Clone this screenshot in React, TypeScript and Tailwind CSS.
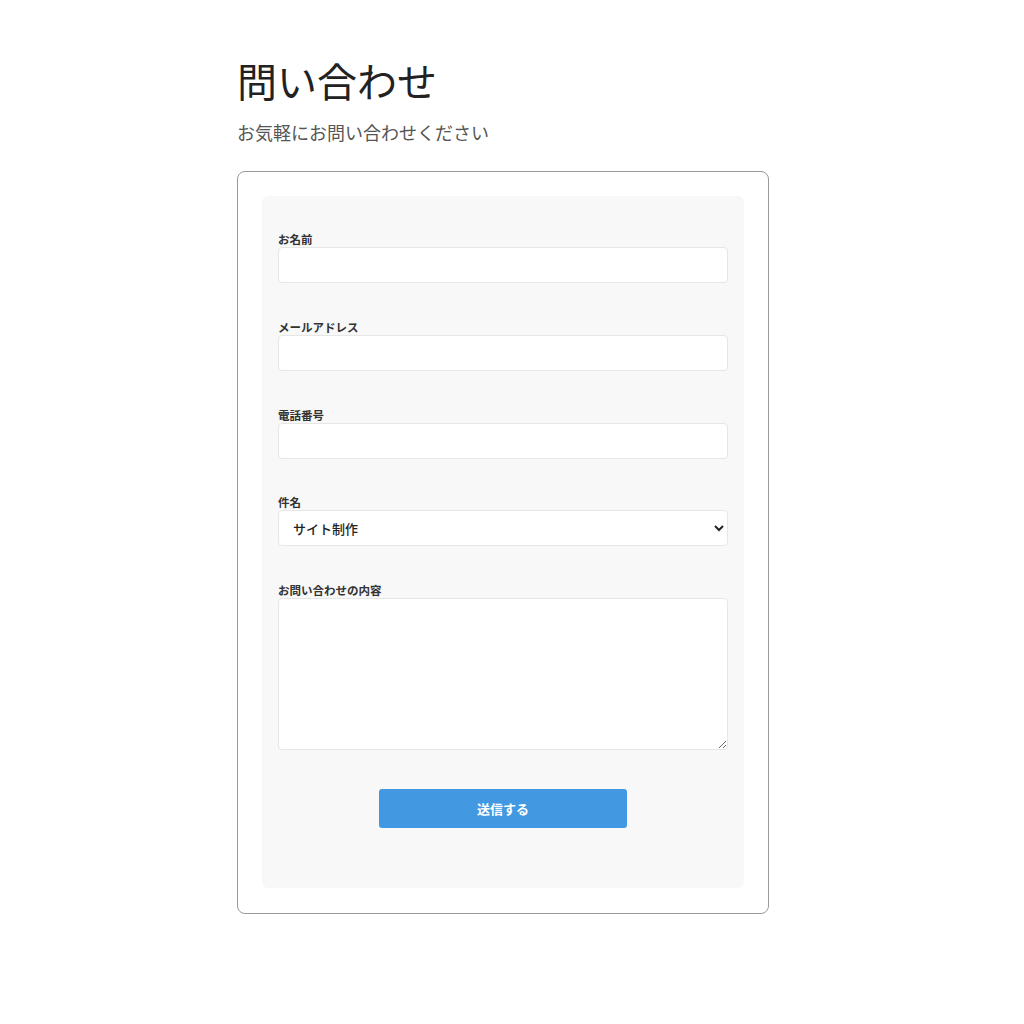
import React from 'react'

const font = { fontFamily: '"Noto Sans CJK JP", "Noto Sans", sans-serif' }

const Field = ({ label, children }: { label: string; children: React.ReactNode }) => (
  <div className="flex flex-col">
    <label className="text-[11.5px] font-bold text-[#333] leading-[13px] mb-[1px]">{label}</label>
    {children}
  </div>
)

const inputCls =
  'w-full h-9 bg-white border border-[#e6e6e6] rounded-[4px] px-3 text-sm outline-none'

export default function App() {
  return (
    <main className="min-h-screen bg-white" style={font}>
      <div className="w-[550px] mx-auto pt-[50px]">
        <h1 className="text-[40px] leading-[60px] text-[#222] font-normal">問い合わせ</h1>
        <p className="text-[18px] text-[#555] mt-[9px] leading-[27px]">お気軽にお問い合わせください</p>

        <section className="w-[532px] mt-[25px] border border-[#9a9a9a] rounded-[8px] px-6 pt-6 pb-[25px]">
          <form className="bg-[#f8f8f8] rounded-[6px] px-4 pt-[37px] pb-[60px] flex flex-col gap-[37.75px]">
            <Field label="お名前">
              <input type="text" className={inputCls} />
            </Field>
            <Field label="メールアドレス">
              <input type="email" className={inputCls} />
            </Field>
            <Field label="電話番号">
              <input type="tel" className={inputCls} />
            </Field>
            <Field label="件名">
              <select
                className="w-full h-9 bg-white border border-[#e6e6e6] rounded-[4px] pl-[10px] pr-1 text-[13px] font-medium text-[#222] outline-none"
                defaultValue="site"
              >
                <option value="site">サイト制作</option>
                <option value="other">その他</option>
              </select>
            </Field>
            <Field label="お問い合わせの内容">
              <textarea className="w-full h-[152px] bg-white border border-[#e6e6e6] rounded-[4px] px-3 py-2 text-sm outline-none" />
            </Field>
            <div className="flex justify-center pt-[1px]">
              <button
                type="button"
                className="w-[248px] h-[39px] bg-[#4299e1] text-white text-[13px] font-bold rounded-[3px]"
              >
                送信する
              </button>
            </div>
          </form>
        </section>
      </div>
    </main>
  )
}
